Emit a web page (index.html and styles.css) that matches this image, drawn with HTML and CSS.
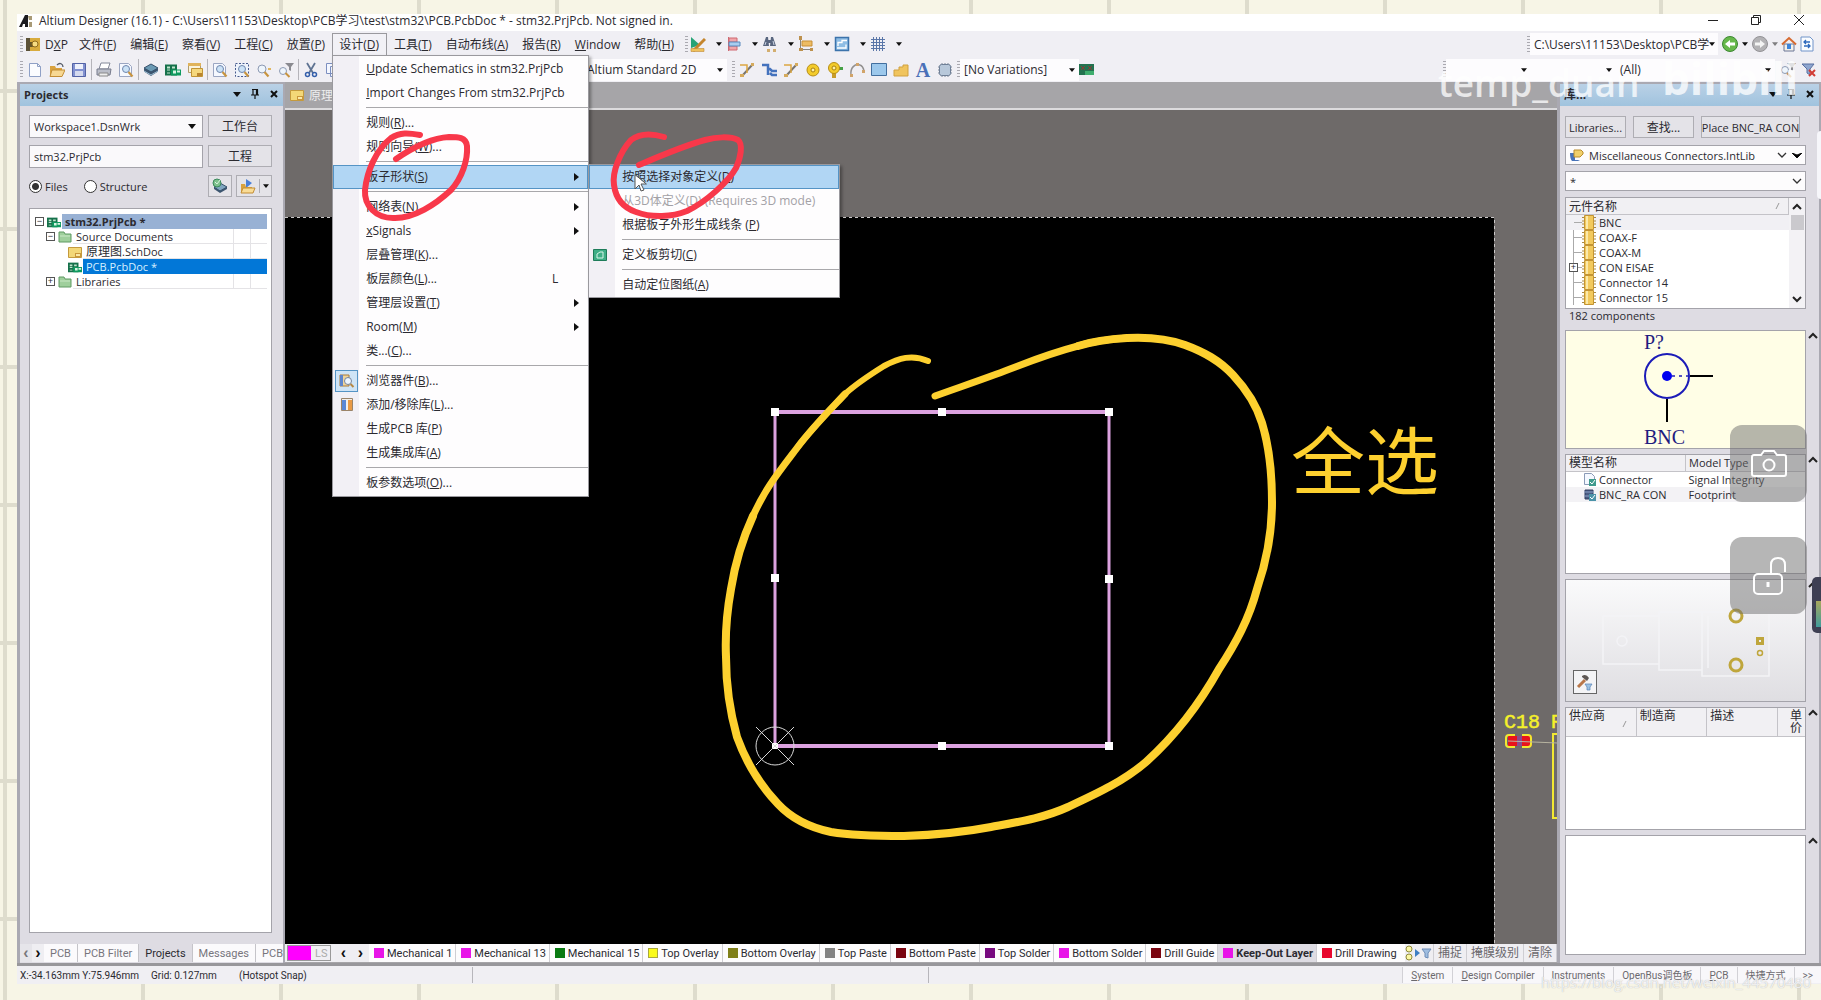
FILE: index.html
```html
<!DOCTYPE html>
<html lang="zh-CN">
<head>
<meta charset="utf-8">
<title>Altium Designer (16.1)</title>
<link rel="stylesheet" href="styles.css">
</head>
<body>
<svg class="defs" aria-hidden="true">
  <symbol id="caret" viewBox="0 0 8 5"><path d="M0 0h8L4 5z" fill="#111"/></symbol>
  <symbol id="down" viewBox="0 0 10 6"><path d="M1 1l4 4 4-4" fill="none" stroke="#333" stroke-width="1.3"/></symbol>
  <symbol id="up" viewBox="0 0 10 7"><path d="M1 6l4-4 4 4" fill="none" stroke="#222" stroke-width="2"/></symbol>
  <symbol id="right" viewBox="0 0 5 8"><path d="M0 0l5 4-5 4z" fill="#111"/></symbol>
  <symbol id="slash" viewBox="0 0 5 8"><path d="M1 7l3-6" stroke="#999"/></symbol>
  <symbol id="pin" viewBox="0 0 10 10"><path d="M2 .5h6M3 .5V6M6.500 .5V6M7.500 .5V6M1 6h8M5 6v4" fill="none" stroke="#111" stroke-width="1.200"/></symbol>
  <symbol id="close" viewBox="0 0 10 10"><path d="M2 2l6 6M8 2L2 8" stroke="#111" stroke-width="2"/></symbol>
  <symbol id="folder" viewBox="0 0 14 12"><path d="M1 11V1h5l1 2h6v8z" fill="#9fcf9c" stroke="#5f9a62"/><path d="M2 5h10" stroke="#c9e8c5"/></symbol>
  <symbol id="sch" viewBox="0 0 14 12"><path d="M.5 1.500h13v10H.5z" fill="#f3d777" stroke="#c49a3d"/><path d="M7 7h6v4H7z" fill="#c9963a"/><path d="M8 8h4v2H8z" fill="#fbe9a6"/></symbol>
  <symbol id="pcb" viewBox="0 0 16 12"><path d="M0 1h12v11H0z" fill="#16714b"/><path d="M2 3h3v2H2zM2 6h3v1H2zM2 9h3v1H2zM7 3h3v2H7z" fill="#bfe5cd"/><path d="M6 6h10v6H6z" fill="#0f9a5f"/><path d="M8 7h3v3H8zM12 7h3v2h-3z" fill="#d8f4e3"/></symbol>
  <symbol id="glass" viewBox="0 0 16 16"><path d="M1.500 1.500h9l3 3v10h-12z" fill="#f5f8ff" stroke="#9ba6c2"/><circle cx="8" cy="7" r="3.500" fill="#cbe2f6" stroke="#6f86ae"/><path d="M10.500 10l4 4.500" stroke="#c8943f" stroke-width="2.200"/></symbol>
  <symbol id="chip" viewBox="0 0 14 15"><path d="M0 2.500h14M0 6h14M0 9h14M0 12.500h14" stroke="#a88a45"/><path d="M2.500.5h9v14h-9z" fill="#f2c95c" stroke="#c39433"/><path d="M5 1v13" stroke="#fbe9a9" stroke-width="2"/></symbol>
  <symbol id="stack" viewBox="0 0 16 14"><path d="M1 8.500l7 4.500 7-4.500v-3H1z" fill="#3d5670"/><path d="M1 8l7 4 7-4" stroke="#9fc0d5" fill="none"/><path d="M8 1l7 4-7 4-7-4z" fill="#6b9ab4" stroke="#35506b"/></symbol>
  <symbol id="route" viewBox="0 0 16 16"><path d="M3 14L14 2" stroke="#77746f" stroke-width="2"/><path d="M1 3h7v8" fill="none" stroke="#dba640" stroke-width="1.500"/><path d="M1 12h4v3H1zM12 1h3v3h-3z" fill="#d5aa5c"/></symbol>
</svg>

<div class="app">
  <header class="titlebar">
    <svg width="14" height="12" viewBox="0 0 14 12"><path d="M0 12L6 0h3v12H6V9H4l-1 3z" fill="#1c1c20"/><path d="M9 1h4v4h-3zM10 7h3v5h-3z" fill="#a89a76"/></svg>
    <h1>Altium Designer (16.1) - C:\Users\11153\Desktop\PCB学习\test\stm32\PCB.PcbDoc * - stm32.PrjPcb. Not signed in.</h1>
    <div class="winbtns">
      <button aria-label="Minimize"><svg width="10" height="10"><path d="M0 5.500h10" stroke="#222"/></svg></button>
      <button aria-label="Restore"><svg width="10" height="10" fill="none" stroke="#222"><path d="M.5 2.500h7v7h-7zM2.500 2V.5h7v7H8"/></svg></button>
      <button aria-label="Close"><svg width="10" height="10"><path d="M0 0l10 10M10 0L0 10" stroke="#222"/></svg></button>
    </div>
  </header>

  <nav class="bar menubar">
    <i class="grip"></i>
    <button class="menu dxp"><svg width="15" height="15" viewBox="0 0 15 15"><path d="M0 1h14v13H0z" fill="#d8ab3d"/><path d="M0 1h4v13H0z" fill="#5b5137"/><path d="M4 5h3v5H4z" fill="#665528"/><circle cx="9" cy="7" r="3" fill="#f6dc83" stroke="#8f6b1d"/></svg><span>D<u>X</u>P</span></button>
    <button class="menu">文件(<u>F</u>)</button>
    <button class="menu">编辑(<u>E</u>)</button>
    <button class="menu">察看(<u>V</u>)</button>
    <button class="menu">工程(<u>C</u>)</button>
    <button class="menu">放置(<u>P</u>)</button>
    <div class="menu-open">
      <button class="menu active">设计(<u>D</u>)</button>
      <ul class="dropdown">
        <li><button><u>U</u>pdate Schematics in stm32.PrjPcb</button></li>
        <li><button><u>I</u>mport Changes From stm32.PrjPcb</button></li>
        <li class="sep"></li>
        <li><button>规则(<u>R</u>)...</button></li>
        <li><button>规则向导(<u>W</u>)...</button></li>
        <li class="sep"></li>
        <li class="has-sub"><button class="hot">板子形状(<u>S</u>)<svg class="arrow" width="5" height="8"><use href="#right"/></svg></button>
          <ul class="dropdown sub">
            <li><button class="hot">按照选择对象定义(<u>D</u>)</button></li>
            <li><button disabled>从3D体定义(<u>D</u>) (Requires 3D mode)</button></li>
            <li><button>根据板子外形生成线条 (<u>P</u>)</button></li>
            <li class="sep"></li>
            <li><button><svg class="mark" width="14" height="12" viewBox="0 0 14 12"><path d="M.5.5h13v11H.5z" fill="#3fae86" stroke="#1e7c59"/><path d="M4 9V5l3-2h3v6z" fill="none" stroke="#d8f5e9"/></svg>定义板剪切(<u>C</u>)</button></li>
            <li class="sep"></li>
            <li><button>自动定位图纸(<u>A</u>)</button></li>
          </ul>
        </li>
        <li class="sep"></li>
        <li><button>网络表(<u>N</u>)<svg class="arrow" width="5" height="8"><use href="#right"/></svg></button></li>
        <li><button><u>x</u>Signals<svg class="arrow" width="5" height="8"><use href="#right"/></svg></button></li>
        <li><button>层叠管理(<u>K</u>)...</button></li>
        <li><button>板层颜色(<u>L</u>)...<kbd>L</kbd></button></li>
        <li><button>管理层设置(<u>T</u>)<svg class="arrow" width="5" height="8"><use href="#right"/></svg></button></li>
        <li><button>Room(<u>M</u>)<svg class="arrow" width="5" height="8"><use href="#right"/></svg></button></li>
        <li><button>类...(<u>C</u>)...</button></li>
        <li class="sep"></li>
        <li><button><span class="mark checked"><svg width="16" height="14" viewBox="0 0 16 14"><path d="M1 1h9v11H1z" fill="#f0d59a" stroke="#aa7b3a"/><path d="M1 1h3v11H1z" fill="#5f86cc"/><circle cx="9" cy="7" r="3.500" fill="#eef6ff" stroke="#76839c"/><path d="M11.500 10l3 3" stroke="#b68843" stroke-width="2"/></svg></span>浏览器件(<u>B</u>)...</button></li>
        <li><button><span class="mark"><svg width="12" height="13" viewBox="0 0 12 13"><path d="M.5.5h11v12H.5z" fill="#f4efe9" stroke="#9b8468"/><path d="M1 2h4v10H1z" fill="#5a88d6"/><path d="M7 2h4v10H7z" fill="#e89a45"/></svg></span>添加/移除库(<u>L</u>)...</button></li>
        <li><button>生成PCB 库(<u>P</u>)</button></li>
        <li><button>生成集成库(<u>A</u>)</button></li>
        <li class="sep"></li>
        <li><button>板参数选项(<u>O</u>)...</button></li>
      </ul>
    </div>
    <button class="menu">工具(<u>T</u>)</button>
    <button class="menu">自动布线(<u>A</u>)</button>
    <button class="menu">报告(<u>R</u>)</button>
    <button class="menu"><u>W</u>indow</button>
    <button class="menu">帮助(<u>H</u>)</button>
    <i class="grip after"></i>
    <div class="drops">
      <button aria-label="Utilities"><svg width="16" height="16" viewBox="0 0 16 16"><path d="M1 1v11l9-3z" fill="#27a376"/><path d="M3 15L15 3" stroke="#c4852d" stroke-width="3"/><path d="M1 12.500h13v3H1z" fill="#efc15c" stroke="#c08a35" stroke-width=".6"/></svg><svg width="6" height="4"><use href="#caret"/></svg></button>
      <button aria-label="Align"><svg width="16" height="16" viewBox="0 0 16 16"><path d="M2.500 1v14" stroke="#cc6b74"/><path d="M3 2h8v4H3zM3 10h8v4H3z" fill="#f1a5aa" stroke="#cf6871"/><path d="M3 6h11v4H3z" fill="#a9cdf0" stroke="#5b89bd"/></svg><svg width="6" height="4"><use href="#caret"/></svg></button>
      <button aria-label="Find"><svg width="16" height="16" viewBox="0 0 16 16"><path d="M4 1h2l1 9H1zM9 1h2l3 9H8zM6 4h3v3H6z" fill="#59667f"/><path d="M4 6l-1 3M11 5l1 4" stroke="#c9d2e2"/><path d="M5 13h3v3H5zM11 13h3v3h-3z" fill="#d3ae6f"/></svg><svg width="6" height="4"><use href="#caret"/></svg></button>
      <button aria-label="Dimension"><svg width="16" height="16" viewBox="0 0 16 16"><path d="M2.500 1v14M2 13.500h13" stroke="#88867f"/><path d="M4 5h10v5H4z" fill="#edbc63" stroke="#c78f36"/><path d="M1 0h3v4H1zM1 12h4v3H1zM12 12h3v3h-3z" fill="#bd914e"/></svg><svg width="6" height="4"><use href="#caret"/></svg></button>
      <button aria-label="Room"><svg width="16" height="16" viewBox="0 0 16 16"><path d="M1.500 1.500h13v13h-13z" fill="#8ebde4" stroke="#3c73ab" stroke-width="1.500"/><path d="M4 10V6.500h4V4.500h5M3 12h9V8.500" fill="none" stroke="#fff" stroke-width="1.300"/></svg><svg width="6" height="4"><use href="#caret"/></svg></button>
      <button aria-label="Grid"><svg width="16" height="16" viewBox="0 0 16 16"><path d="M3.500 1v14M6.500 1v14M9.500 1v14M12.500 1v14M1 3.500h14M1 6.500h14M1 9.500h14M1 12.500h14" stroke="#5a76a8"/></svg><svg width="6" height="4"><use href="#caret"/></svg></button>
    </div>
    <span class="spacer"></span>
    <i class="grip"></i>
    <div class="field path"><span>C:\Users\11153\Desktop\PCB学</span><svg width="6" height="4"><use href="#caret"/></svg></div>
    <div class="navset">
      <button aria-label="Back"><svg width="18" height="18" viewBox="0 0 18 18"><circle cx="9" cy="9" r="7.500" fill="#67b84b" stroke="#3c8732"/><path d="M4 9l5-4v2.500h5v3H9V13z" fill="#fff"/></svg></button>
      <svg width="6" height="4"><use href="#caret"/></svg>
      <button aria-label="Forward"><svg width="18" height="18" viewBox="0 0 18 18"><circle cx="9" cy="9" r="7.500" fill="#b3b2b5" stroke="#939296"/><path d="M14 9l-5-4v2.500H4v3h5V13z" fill="#f4f4f4"/></svg></button>
      <svg class="dim" width="6" height="4"><use href="#caret"/></svg>
      <button aria-label="Home"><svg width="16" height="16" viewBox="0 0 16 16"><path d="M3 8h10v7H3z" fill="#f3f0ea" stroke="#6b7796"/><path d="M1 8.500l7-6.500 7 6.500" fill="none" stroke="#d66a31" stroke-width="2"/><path d="M6 8h4v5H6z" fill="#3c84dc"/></svg></button>
      <button aria-label="Refresh"><svg width="14" height="16" viewBox="0 0 14 16"><path d="M1 1h9l3 3v11H1z" fill="#fafcff" stroke="#7194c9"/><path d="M4 6h6M6 4L4 6l2 2M10 10H4M8 8l2 2-2 2" fill="none" stroke="#2c68bd" stroke-width="1.300"/></svg></button>
    </div>
  </nav>

  <div class="bar toolbar">
    <i class="grip"></i>
    <div class="group">
      <button aria-label="New"><svg width="16" height="16" viewBox="0 0 16 16"><path d="M2.500 1.500h8l3 3v10h-11z" fill="#fbfcff" stroke="#8fa0c6"/><path d="M10.500 1.500v3h3" fill="none" stroke="#8fa0c6"/></svg></button>
      <button aria-label="Open"><svg width="16" height="16" viewBox="0 0 16 16"><path d="M1 4h5l1 2h6v8H1z" fill="#d9a23f"/><path d="M3 8h13l-3 6.500H1z" fill="#f7d893" stroke="#c28d35"/><path d="M8 3c3-3 6-1 6 2" fill="none" stroke="#555c68" stroke-width="1.300"/></svg></button>
      <button aria-label="Save"><svg width="16" height="16" viewBox="0 0 16 16"><path d="M1.500 1.500h13v13h-13z" fill="#8291d0" stroke="#5363a6"/><path d="M4 2h8v5H4z" fill="#eef1fb"/><path d="M4 9h8v5H4z" fill="#d5daee"/></svg></button>
    </div>
    <div class="group">
      <button aria-label="Print"><svg width="16" height="16" viewBox="0 0 16 16"><path d="M5 1h9l-2 6H3z" fill="#fff" stroke="#838899"/><path d="M1 7h14l-1 6H1z" fill="#bbbec9" stroke="#777b8c"/><path d="M3 11h9v3H3z" fill="#eee" stroke="#888"/></svg></button>
      <button aria-label="Preview"><svg width="16" height="16"><use href="#glass"/></svg></button>
    </div>
    <div class="group">
      <button aria-label="Layers"><svg width="16" height="16"><use href="#stack"/></svg></button>
      <button aria-label="Board"><svg width="16" height="13"><use href="#pcb"/></svg></button>
      <button aria-label="Sheet"><svg width="16" height="16" viewBox="0 0 16 16"><path d="M1.500 1.500h12v9h-12z" fill="#faf3dc" stroke="#b19c6c"/><path d="M1 1h13v3H1z" fill="#e0b35b"/><path d="M4.500 6.500h11v8h-11z" fill="#f5d77c" stroke="#c19436"/><path d="M10 11h5v3h-5z" fill="#b9842f"/></svg></button>
    </div>
    <div class="group">
      <button aria-label="Fit document"><svg width="16" height="16"><use href="#glass"/></svg></button>
      <button aria-label="Zoom area"><svg width="16" height="16" viewBox="0 0 16 16"><path d="M1.500 1.500h13v13h-13z" fill="#eef3fb" stroke="#465a8e" stroke-dasharray="2 1.500"/><circle cx="8" cy="7" r="3.500" fill="#cbe2f6" stroke="#6f86ae"/><path d="M10.500 10l4 4.500" stroke="#c8943f" stroke-width="2.200"/></svg></button>
      <button aria-label="Zoom selected"><svg width="16" height="16" viewBox="0 0 16 16"><circle cx="6" cy="7" r="4" fill="#eef5fc" stroke="#8d9ab3"/><path d="M8.500 10l4 4.500" stroke="#c8943f" stroke-width="2.200"/><path d="M12 6h3v2h-3z" fill="#e0b660"/></svg></button>
      <button aria-label="Zoom filtered"><svg width="16" height="16" viewBox="0 0 16 16"><path d="M7 1h9l-3 4v4l-2-1V5z" fill="#8a8a90"/><circle cx="5" cy="9" r="3.500" fill="#eef5fc" stroke="#8d9ab3"/><path d="M7.500 11l4 4" stroke="#c8943f" stroke-width="2"/></svg></button>
    </div>
    <div class="group">
      <button aria-label="Cut"><svg width="16" height="16" viewBox="0 0 16 16"><path d="M4 1l6 10M12 1L6 11" stroke="#5f7392" stroke-width="1.800"/><circle cx="4.500" cy="12.500" r="2" fill="none" stroke="#345fab" stroke-width="1.500"/><circle cx="11.500" cy="12.500" r="2" fill="none" stroke="#345fab" stroke-width="1.500"/></svg></button>
      <button aria-label="Copy"><svg width="16" height="16" viewBox="0 0 16 16"><path d="M1.500 1.500h8v10h-8zM5.500 4.500h8v10h-8z" fill="#f4f7ff" stroke="#7c8fc0"/></svg></button>
    </div>
    <div class="field view"><span>Altium Standard 2D</span><svg width="6" height="4"><use href="#caret"/></svg></div>
    <i class="grip"></i>
    <div class="group place">
      <button aria-label="Route"><svg width="16" height="16"><use href="#route"/></svg></button>
      <button aria-label="Differential pair"><svg width="16" height="16" viewBox="0 0 16 16"><path d="M1 3h6v10M7 7h2l2 2h5M9 11l2 2h5" fill="none" stroke="#4472bd" stroke-width="2.500"/></svg></button>
      <button aria-label="Multi route"><svg width="16" height="16"><use href="#route"/></svg></button>
      <button aria-label="Pad"><svg width="16" height="16" viewBox="0 0 16 16"><circle cx="8" cy="8" r="6" fill="#f3cb2b" stroke="#b78d16"/><circle cx="8" cy="8" r="2" fill="#fff2a8" stroke="#a97f10"/></svg></button>
      <button aria-label="Via"><svg width="16" height="16" viewBox="0 0 16 16"><path d="M5 10h4v6H5z" fill="#c79c2b"/><path d="M10 5h6v3h-6z" fill="#45a046"/><circle cx="7" cy="6" r="5.500" fill="#f3cb2b" stroke="#b78d16"/><circle cx="7" cy="6" r="2" fill="#fff2a8" stroke="#a97f10"/></svg></button>
      <button aria-label="Arc"><svg width="16" height="16" viewBox="0 0 16 16"><path d="M2 13C1 6 6 1 11 3q3 1 4 6" fill="none" stroke="#92908f" stroke-width="1.500"/><path d="M1 12h3v3H1zM13 8h3v3h-3zM7 1h3v3H7z" fill="#d1a46a"/></svg></button>
      <button aria-label="Fill"><svg width="16" height="16" viewBox="0 0 16 16"><path d="M.5 1.500h15v12H.5z" fill="#9cc8ec" stroke="#426f9f"/></svg></button>
      <button aria-label="Polygon"><svg width="16" height="16" viewBox="0 0 16 16"><path d="M1 14V8h5V5h4V3h5v11z" fill="#f0c45e" stroke="#d1a13f"/></svg></button>
      <button class="letter" aria-label="Text">A</button>
      <button aria-label="Component"><svg width="16" height="16" viewBox="0 0 16 16"><path d="M1 5h14M1 8h14M1 11h14M5 1v14M8 1v14M11 1v14" stroke="#7a8698"/><rect x="2.500" y="2.500" width="11" height="11" rx="2" fill="#b8c8da" stroke="#6f7f96"/></svg></button>
    </div>
    <i class="grip"></i>
    <div class="field vars"><span>[No Variations]</span><svg width="6" height="4"><use href="#caret"/></svg></div>
    <button aria-label="Variants"><svg width="15" height="13" viewBox="0 0 15 13"><path d="M0 1h15v11H0z" fill="#23724f"/><path d="M2 3l4 4M6 3L2 7M9 3l4 4M13 3L9 7" stroke="#8b3a37"/><path d="M6 8h9v4H6z" fill="#3fae6e"/></svg></button>
    <span class="spacer"></span>
    <i class="grip"></i>
    <div class="field f1"><span></span><svg width="6" height="4"><use href="#caret"/></svg></div>
    <div class="field f1"><span></span><svg width="6" height="4"><use href="#caret"/></svg></div>
    <div class="field f2"><span>(All)</span><svg width="6" height="4"><use href="#caret"/></svg></div>
    <div class="navset last">
      <button aria-label="Find filter"><svg width="16" height="16" viewBox="0 0 16 16"><path d="M7 1h9l-3 4v4l-2-1V5z" fill="#8a8a90"/><circle cx="5" cy="8" r="3.500" fill="#eef5fc" stroke="#8d9ab3"/><path d="M7 11l4 4" stroke="#c8943f" stroke-width="2"/></svg></button>
      <button aria-label="Clear filter"><svg width="14" height="16" viewBox="0 0 14 16"><path d="M0 2h12L8 7v6l-3-2V7z" fill="#8ea6d0" stroke="#586fa0"/><path d="M7 8l6 6M13 8l-6 6" stroke="#d23c34" stroke-width="2"/></svg></button>
    </div>
  </div>

  <main class="work">
    <aside class="panel left">
      <h2>Projects<svg width="8" height="5"><use href="#caret"/></svg><svg width="10" height="10"><use href="#pin"/></svg><svg width="10" height="10"><use href="#close"/></svg></h2>
      <div class="projects">
        <div class="form">
          <div class="select"><select aria-label="Workspace"><option>Workspace1.DsnWrk</option></select><svg width="8" height="5"><use href="#caret"/></svg></div>
          <button class="btn cjk">工作台</button>
          <input class="text" type="text" aria-label="Project" value="stm32.PrjPcb">
          <button class="btn cjk">工程</button>
          <div class="radios">
            <label><input type="radio" name="view" checked>Files</label>
            <label><input type="radio" name="view">Structure</label>
          </div>
          <div class="pair">
            <button class="btn sq" aria-label="Compile"><svg width="16" height="16" viewBox="0 0 16 16"><path d="M2 11l6 4 7-4V9H2z" fill="#3d5670"/><path d="M8 5l7 4-7 4-6-4z" fill="#7fa6c0" stroke="#35506b"/><circle cx="5" cy="5" r="4" fill="#7cc08c" stroke="#3b8a5c"/><path d="M3 4l2 2 3-4" fill="none" stroke="#d9f2df"/></svg></button>
            <button class="btn wide" aria-label="Open project"><svg width="16" height="16" viewBox="0 0 16 16"><path d="M6 1l6 4-6 5z" fill="#4a7fd8"/><path d="M1 6h4l1 3h6v5H1z" fill="#d9a23f"/><path d="M3 10h12l-2 5H1z" fill="#f9dc96" stroke="#c28d35"/></svg><i></i><svg width="6" height="4"><use href="#caret"/></svg></button>
          </div>
        </div>
        <ul class="tree">
          <li class="l0"><b class="tog">−</b><svg width="14" height="12" viewBox="0 0 14 12"><use href="#pcb"/></svg><span class="name head">stm32.PrjPcb *</span></li>
          <li class="l1"><b class="tog">−</b><svg width="14" height="12"><use href="#folder"/></svg><span class="name cells">Source Documents</span></li>
          <li class="l2"><svg width="14" height="12"><use href="#sch"/></svg><span class="name cells"><em>原理图</em>.SchDoc</span></li>
          <li class="l2"><svg width="14" height="12" viewBox="0 0 14 12"><use href="#pcb"/></svg><span class="name sel">PCB.PcbDoc *</span></li>
          <li class="l1"><b class="tog">+</b><svg width="14" height="12"><use href="#folder"/></svg><span class="name cells">Libraries</span></li>
        </ul>
      </div>
      <div class="tabs">
        <button class="step dim">‹</button><button class="step">›</button>
        <button>PCB</button><button>PCB Filter</button><button class="on">Projects</button><button>Messages</button><button class="cut">PCB</button>
      </div>
    </aside>

    <section class="doc">
      <div class="doctabs"><svg width="14" height="12"><use href="#sch"/></svg><span>原理图</span></div>
      <div class="canvas">
        <svg viewBox="285 110 1273 834" preserveAspectRatio="xMinYMin slice">
          <path d="M285 217h1209v727H285z" fill="#000"/>
          <path d="M285 217.500h1209.500V944" fill="none" stroke="#c9c7c7" stroke-dasharray="3 3"/>
          <g stroke="#dca2df"><path d="M775 412h334M775 746h334" stroke-width="4"/><path d="M775 412v334M1109 412v334" stroke-width="3"/></g>
          <g fill="#fff"><path d="M771 408h8v8h-8zM938 408h8v8h-8zM1105 408h8v8h-8zM771 574h8v8h-8zM1105 575h8v8h-8zM938 742h8v8h-8zM1105 742h8v8h-8zM772 743h6v6h-6z"/></g>
          <g fill="none" stroke="#d8d8d8"><circle cx="775" cy="746" r="19"/><path d="M756 727l38 38M794 727l-38 38"/></g>
          <g font-family="Liberation Mono, monospace" font-size="20" fill="#f5f02a" stroke="#f5f02a" stroke-width=".5"><text x="1504" y="728">C18</text><text x="1551" y="728">R</text></g>
          <path d="M1508 736h24v10h-24z" fill="#e8121c"/><path d="M1517 736h5v10h-5z" fill="#8b4a8e"/>
          <path d="M1515 735h-6q-3 0-3 3v6q0 3 3 3h6M1522 735h6q3 0 3 3v6q0 3-3 3h-6M1558 734h-5v84h5" fill="none" stroke="#f2e832" stroke-width="2"/>
          <path d="M1508 741l50 2" stroke="#b7b3a0"/>
        </svg>
      </div>
      <div class="layers">
        <span class="ls"><i></i>LS</span>
        <button class="step">‹</button><button class="step">›</button>
        <button><i class="magenta"></i>Mechanical 1</button>
        <button><i class="magenta"></i>Mechanical 13</button>
        <button><i class="green"></i>Mechanical 15</button>
        <button><i class="yellow"></i>Top Overlay</button>
        <button><i class="olive"></i>Bottom Overlay</button>
        <button><i class="gray"></i>Top Paste</button>
        <button><i class="maroon"></i>Bottom Paste</button>
        <button><i class="purple"></i>Top Solder</button>
        <button><i class="magenta"></i>Bottom Solder</button>
        <button><i class="maroon"></i>Drill Guide</button>
        <button class="on"><i class="magenta"></i>Keep-Out Layer</button>
        <button class="clip"><i class="red"></i>Drill Drawing</button>
        <button class="cmd" aria-label="Filter"><svg width="28" height="16" viewBox="0 0 28 16"><circle cx="4" cy="4" r="3" fill="#fbf7a5" stroke="#8f8a3c"/><circle cx="4" cy="12" r="3" fill="#fbf7a5" stroke="#8f8a3c"/><path d="M10 4l5 4-5 4z" fill="#3f7fc4"/><path d="M17 4h9l-3 4v5l-3-1V8z" fill="#9fbde0" stroke="#6c8cb8"/></svg></button>
        <button class="cmd">捕捉</button><button class="cmd">掩膜级别</button><button class="cmd">清除</button>
      </div>
    </section>

    <aside class="panel right">
      <h2>库...<svg width="8" height="5"><use href="#caret"/></svg><svg width="10" height="10"><use href="#pin"/></svg><svg width="10" height="10"><use href="#close"/></svg></h2>
      <div class="lib">
        <div class="row">
          <button class="btn">Libraries...</button><button class="btn cjk">查找...</button><button class="btn place-btn">Place BNC_RA CON</button>
        </div>
        <div class="select flat"><svg class="ico" width="14" height="12" viewBox="0 0 14 12"><path d="M0 4h5v7h5l-2 1H2q-2-2-2-8z" fill="#4873b9"/><path d="M4 1h7q3 2 2 4l-3 3H4z" fill="#f1d06b" stroke="#b98d2f"/></svg><select aria-label="Library"><option>Miscellaneous Connectors.IntLib</option></select><svg width="10" height="6"><use href="#down"/></svg><svg width="10" height="5" viewBox="0 0 10 5"><path d="M0 0l5 2 5-2-5 5z" stroke="#111"/></svg></div>
        <div class="select flat"><input type="text" aria-label="Filter" value="*"><svg width="10" height="6"><use href="#down"/></svg></div>
        <div class="box comps">
          <div class="list">
            <div class="th">元件名称<svg width="5" height="8"><use href="#slash"/></svg></div>
            <ul>
              <li class="cur"><svg width="14" height="15"><use href="#chip"/></svg>BNC</li>
              <li><svg width="14" height="15"><use href="#chip"/></svg>COAX-F</li>
              <li><svg width="14" height="15"><use href="#chip"/></svg>COAX-M</li>
              <li class="plus"><b class="tog">+</b><svg width="14" height="15"><use href="#chip"/></svg>CON EISAE</li>
              <li><svg width="14" height="15"><use href="#chip"/></svg>Connector 14</li>
              <li><svg width="14" height="15"><use href="#chip"/></svg>Connector 15</li>
            </ul>
          </div>
          <div class="scroll"><svg width="10" height="7"><use href="#up"/></svg><i></i><span></span><svg class="flip" width="10" height="7"><use href="#up"/></svg></div>
        </div>
        <p class="count">182 components</p>
        <div class="fold"><div class="box symbol">
          <svg width="239" height="116" viewBox="0 0 239 116"><g font-family="Liberation Serif, serif" font-size="20" fill="#1f1d80"><text x="78" y="18">P?</text><text x="78" y="113">BNC</text></g><circle cx="101" cy="45" r="22" fill="none" stroke="#1c1cb8" stroke-width="2"/><circle cx="101" cy="45" r="5" fill="#0000f0"/><path d="M106 45h16" stroke="#1c1cb8" stroke-width="1.500" stroke-dasharray="3 4"/><path d="M124 45h23M101 68v23" stroke="#000" stroke-width="2"/></svg>
        </div><svg width="10" height="7"><use href="#up"/></svg></div>
        <div class="fold"><div class="box models">
          <table>
            <thead><tr><th>模型名称</th><th>Model Type</th></tr></thead>
            <tbody>
              <tr><td><svg width="12" height="13" viewBox="0 0 12 13"><path d="M.5.5h7l3 3v8H.5z" fill="#f4f8ff" stroke="#8b9bb8"/><path d="M5 6h7v7H5z" fill="#3f9a8c"/><path d="M6 9l2 2 3-4" fill="none" stroke="#fff"/></svg>Connector</td><td>Signal Integrity</td></tr>
              <tr class="alt"><td><svg width="12" height="13" viewBox="0 0 12 13"><path d="M1 2h8v9H1z" fill="#4b5d83" stroke="#333f60"/><path d="M0 4h10M0 8h10" stroke="#8ea3c8"/><path d="M5 6h7v7H5z" fill="#4b93a8"/><path d="M6 9l2 2 3-4" fill="none" stroke="#fff"/></svg>BNC_RA CON</td><td>Footprint</td></tr>
            </tbody>
          </table>
        </div><svg width="10" height="7"><use href="#up"/></svg></div>
        <div class="fold"><div class="box foot">
          <svg width="239" height="120" viewBox="0 0 239 120"><g fill="none" stroke="#f3f3f6" stroke-width="1.500"><path d="M37 36h56v48H37zM93 32h43v58H93zM136 32h67v64h-67zM142 36v52"/><circle cx="56" cy="61" r="5"/></g><g fill="none" stroke="#bfa63c" stroke-width="3"><circle cx="170" cy="36" r="6"/><circle cx="170" cy="85" r="6"/><path d="M191.500 58.500h5v5h-5z"/><circle cx="194" cy="73" r="2.500" stroke-width="1.500"/></g></svg>
          <button class="tool" aria-label="Tools"><svg width="18" height="18" viewBox="0 0 18 18"><path d="M2 14l7-7" stroke="#b8774a" stroke-width="3"/><path d="M6 3q4-3 7 2l-2 3-5-4z" fill="#5d5754"/><path d="M9 11h7l-2 3v3h-3v-3z" fill="#9cc2e4" stroke="#5882b4" stroke-width=".7"/></svg></button>
        </div><svg width="10" height="7"><use href="#up"/></svg></div>
        <div class="fold"><div class="box supply">
          <table><thead><tr><th>供应商<svg width="5" height="8"><use href="#slash"/></svg></th><th>制造商</th><th>描述</th><th class="end">单<br>价</th></tr></thead></table>
        </div><svg width="10" height="7"><use href="#up"/></svg></div>
        <div class="fold grow"><div class="box"></div><svg width="10" height="7"><use href="#up"/></svg></div>
      </div>
    </aside>
  </main>

  <footer class="status">
    <span class="xy">X:-34.163mm Y:75.946mm</span><span class="grid">Grid: 0.127mm</span><span class="snap">(Hotspot Snap)</span><span class="msg"></span>
    <span class="spacer"></span>
    <button><u>S</u>ystem</button><button><u>D</u>esign Compiler</button><button><u>I</u>nstruments</button><button>OpenBus调色板</button><button><u>P</u>CB</button><button>快捷方式</button><button>&gt;&gt;</button>
  </footer>
</div>

<svg class="ink" width="1460" height="860" viewBox="0 0 1460 860" fill="none" stroke-linecap="round" stroke-linejoin="round">
  <g stroke="#f8384a" stroke-width="6">
    <path d="M420 135C409 133 400 132 391 138C376 150 367 171 365 190C364 206 376 218 393 218C414 219 436 204 451 190C462 178 468 160 467 146C466 137 458 137 449 137C432 138 412 148 396 159"/>
    <path d="M664 137C651 133 640 133 631 140C620 152 612 172 614 185C616 200 624 208 636 212C652 218 672 217 687 211C706 202 728 182 736 168C741 157 743 144 738 140C730 136 716 137 705 140C683 146 660 156 639 165"/>
  </g>
  <g stroke="#fdd02f">
    <path stroke-width="6" d="M928 361C912 354 899 358 884 366C868 376 856 384 845 394C828 412 812 428 797 448"/>
    <path stroke-width="7" d="M845 394C828 412 812 428 797 448C778 473 765 489 753 516"/>
    <path stroke-width="8" d="M753 516C741 542 735 564 731 589C727 611 725 634 726 657C726 684 730 712 737 737C746 762 760 785 778 804C792 819 812 828 831 832C855 836 880 836 904 836C934 835 965 832 991 827C1018 822 1044 818 1068 807C1098 793 1124 781 1146 762C1176 735 1200 703 1219 669C1236 643 1249 619 1257 589C1267 560 1272 530 1272 502C1272 475 1270 449 1262 423C1256 403 1246 389 1233 375C1219 360 1204 352 1185 345C1166 338 1147 337 1127 338C1110 339 1094 341 1078 346"/>
    <path stroke-width="7" d="M1127 338C1110 339 1094 341 1078 346C1055 352 1033 360 1010 369C984 379 960 387 935 396"/>
  </g>
  <path d="M635 175v14l4-4 2 6 3-1-3-6h5z" fill="#fff" stroke="#555"/>
</svg>
<div class="note">全选</div>
<div class="author">temp_duan</div>
<div class="brand">bilibili</div>
<div class="float camera"><svg width="36" height="28" viewBox="0 0 36 28" fill="none" stroke="#fff" stroke-width="2"><path d="M3 5h7l3-4h10l3 4h7q2 0 2 2v17q0 2-2 2H3q-2 0-2-2V7q0-2 2-2z"/><circle cx="18" cy="15" r="5.500"/></svg></div>
<div class="float lock"><svg width="36" height="40" viewBox="0 0 36 40" fill="none" stroke="#fff" stroke-width="2"><rect x="3" y="18" width="28" height="20" rx="4"/><path d="M20 17V9q0-7 7-7t7 7v7"/><path d="M17 26v5" stroke-width="3"/></svg></div>
<div class="edge"><i></i></div>
<div class="edge pale"></div>
<div class="csdn">https://blog.csdn.net/weixin_44570480</div>
</body>
</html>
```
FILE: styles.css
```css
* { box-sizing: border-box; }
body {
  margin: 0; position: relative; min-height: 100vh; overflow: hidden;
  font: 12px/15px "Open Sans", "Noto Sans CJK SC", sans-serif; color: #2b2a30;
  background-color: #f7f5e6;
  background-image: linear-gradient(90deg, #dedccd 4px, transparent 4px), linear-gradient(#dedccd 4px, transparent 4px);
  background-size: 138px 138px; background-position: 3px 0, 0 89px;
}
button, input, select { font: inherit; color: inherit; margin: 0; padding: 0; border: 0; background: none; border-radius: 0; }
button { white-space: nowrap; display: flex; align-items: center; }
ul, h1, h2, p { margin: 0; padding: 0; list-style: none; font-weight: normal; }
svg { flex: none; display: block; }
.defs { position: absolute; width: 0; height: 0; }
.spacer { flex: 1; }
.dim { opacity: .5; }

.app { margin-left: 17px; height: calc(100vh - 16px); padding-top: 14px; display: flex; flex-direction: column; }
.titlebar { height: 17px; background: #fff; display: flex; align-items: flex-start; padding-left: 2px; flex: none; }
.titlebar > svg { margin-top: 1px; }
.titlebar h1 { font-size: 12px; line-height: 13px; margin-left: 6px; flex: 1; white-space: nowrap; }
.winbtns { display: flex; gap: 33px; padding: 1px 17px 0 0; }

.bar { background: #f0eff4; display: flex; align-items: center; flex: none; height: 26px; padding-left: 3px; }
.toolbar { height: 25px; }
.grip { width: 3px; height: 17px; flex: none; background: repeating-linear-gradient(#aaa9b0 0 1px, transparent 1px 3px); }
.after { margin-left: 4px; }
.menu { height: 23px; padding: 0 7px; }
.dxp { gap: 4px; padding-left: 3px; padding-right: 4px; }
.menu-open { position: relative; z-index: 5; }
.menu.active { border: 1px solid #9a999e; border-bottom: 0; padding: 0 7px 0 6px; background: #f2f1f6; }
.dropdown { position: absolute; left: 0; top: 22px; width: 257px; padding: 1px 0; border: 1px solid #9a999e; background: linear-gradient(90deg, #f2f0f5 26px, #fefdfe 26px); box-shadow: 2px 2px 3px rgba(0,0,0,.35); }
.dropdown button { width: 100%; height: 24px; padding: 0 8px 0 32px; position: relative; border: 1px solid transparent; }
.dropdown .hot { background: #b1d6f4; border-color: #5594c5; }
.dropdown :disabled { color: #a3a1a6; }
.dropdown .sep { height: 6px; margin-left: 33px; background: linear-gradient(#a9a8ab, #a9a8ab) 0 2px / 100% 1px no-repeat; }
.dropdown .arrow { margin-left: auto; }
.dropdown kbd { font: inherit; margin: 0 21px 0 auto; }
.dropdown .mark { position: absolute; left: 1px; width: 23px; height: 22px; display: flex; align-items: center; justify-content: center; }
.dropdown svg.mark { width: 14px; height: 12px; left: 3px; }
.dropdown .checked { background: #cfe4f6; border: 1px solid #5594c5; }
.has-sub { position: relative; }
.dropdown.sub { left: 255px; top: -1px; width: 252px; padding: 0; }

.drops { display: flex; gap: 4px; padding-left: 2px; }
.drops button { width: 32px; gap: 10px; }
.field { background: #fdfcfe; height: 22px; display: flex; align-items: center; padding: 0 4px; white-space: nowrap; }
.field span { flex: 1; }
.path { width: 188px; }
.navset { display: flex; align-items: center; gap: 3px; padding: 0 7px 0 3px; }
.group { display: flex; align-items: center; gap: 6px; padding: 0 4px; border-right: 1px solid #b5b4ba; height: 21px; }
.group button { width: 16px; justify-content: center; }
.group:nth-of-type(5) { border: 0; }
.group.place { border: 0; }
.letter { font: bold 20px/20px "Liberation Serif", serif; color: #4a70b8; }
.view { width: 144px; margin: 0 5px 0 238px; }
.vars { width: 119px; }
.f1 { width: 85px; }
.f2 { width: 159px; }
.last { gap: 6px; padding: 0 5px; }

.work { flex: 1; min-height: 0; display: flex; background: #a6a5a8; border-bottom: 3px solid #98979b; }
.panel { display: flex; flex-direction: column; border: 1px solid #aaa9b2; border-width: 2px 2px 0; background: #dedce3; flex: none; font-size: 11px; }
.left { width: 268px; border-left-width: 3px; }
.right { width: 264px; border-left-width: 3px; }
.panel h2 { height: 22px; flex: none; display: flex; align-items: center; gap: 9px; padding: 0 4px 2px 4px; font-size: 12px; font-weight: bold; background: linear-gradient(#bad1e6, #a0c3de); }
.left h2 { font-size: 11px; }
.panel h2 svg:first-of-type { margin-left: auto; }
.projects { flex: 1; min-height: 0; padding: 9px 11px 11px 9px; display: flex; flex-direction: column; gap: 11px; }
.form { display: grid; grid-template-columns: 1fr 64px; gap: 7px 5px; }
.btn { border: 1px solid #aeadb3; background: #e4e3e8; height: 22px; justify-content: center; }
.btn.cjk { font-size: 12px; }
.select, .text { height: 23px; border: 1px solid #a4a3aa; background: #faf9fb; display: flex; align-items: center; padding: 0 6px 0 4px; min-width: 0; }
.select select, .select input { appearance: none; flex: 1; min-width: 0; outline: 0; }
.text { width: 100%; }
.radios { display: flex; gap: 16px; align-items: center; }
.radios label { display: flex; align-items: center; gap: 3px; }
.radios input { width: 13px; height: 13px; appearance: none; border: 1px solid #333; border-radius: 50%; background: #fff; }
.radios input:checked { background: radial-gradient(#333 3px, #fff 4px); }
.pair { display: flex; gap: 4px; }
.sq { width: 24px; }
.wide { width: 36px; gap: 3px; }
.wide i { width: 1px; height: 14px; background: #aeadb3; }
.tree { flex: 1; background: #fff; border: 1px solid #a4a3aa; padding: 5px 4px 0 5px; }
.tree li { display: flex; align-items: center; height: 15px; gap: 1px; }
.tog { width: 9px; height: 9px; border: 1px solid #555; background: #fff; font: 9px/7px "Liberation Sans", sans-serif; text-align: center; margin-right: 2px; flex: none; }
.tree .l1 { padding-left: 11px; }
.tree .l2 { padding-left: 33px; }
.name { flex: 1; padding-left: 3px; height: 15px; line-height: 15px; white-space: nowrap; }
.name em { font-style: normal; font-size: 12px; }
.head { background: #98b1d4; font-weight: bold; }
.sel { background: #0277d7; color: #d7f0ff; }
.cells { border-bottom: 1px solid #e4e3e6; background: linear-gradient(#e4e3e6, #e4e3e6) right 33px top / 1px 15px no-repeat, linear-gradient(#e4e3e6, #e4e3e6) right 16px top / 1px 15px no-repeat; }
.tabs, .layers { height: 18px; flex: none; display: flex; font-size: 11px; overflow: hidden; margin-bottom: 1px; }
.tabs { font-family: Roboto, sans-serif; }
.tabs button { background: #fbfafc; color: #77757c; padding: 0 6px; border-right: 1px solid #c5c4c9; }
.tabs .on { background: #dedce3; color: #2b2a30; }
.tabs .step, .layers .step { width: 17px; background: #efeef2; border: 0; padding: 0; justify-content: center; font: bold 16px/14px "Liberation Sans", sans-serif; color: #111; }
.tabs .cut { flex: 1; border: 0; padding-right: 0; }

.doc { flex: 1; min-width: 0; display: flex; flex-direction: column; }
.doctabs { height: 26px; flex: none; display: flex; align-items: center; gap: 5px; padding-left: 5px; color: #eee; }
.canvas { flex: 1; min-height: 0; border-top: 2px solid #dcdbdd; background: #6e6a69; overflow: hidden; }
.canvas svg { width: 1273px; height: 834px; }
.layers { background: #f0eff3; font-family: Roboto, "Noto Sans CJK SC", sans-serif; }
.layers button { padding: 0 3px 0 5px; gap: 3px; background: #fdfcfd; border-right: 1px solid #cfced3; flex: none; }
.layers i { width: 10px; height: 10px; flex: none; }
.ls { border: 1px solid #999; width: 44px; height: 16px; display: flex; gap: 4px; margin: 1px 4px 0 2px; color: #aaa; flex: none; }
.layers .ls i { width: 23px; height: 14px; background: #f0f; }
.magenta { background: #e815e8; } .green { background: #0a7a12; } .yellow { background: #fafa1a; border: 1px solid #aaa83c; }
.olive { background: #80801a; } .gray { background: #848484; } .maroon { background: #7a0410; } .purple { background: #780a80; } .red { background: #e8082e; }
.layers .on { background: #dedce3; font-weight: bold; }
.layers .clip { flex: 1; min-width: 0; overflow: hidden; border: 0; padding-right: 0; }
.layers .cmd { padding: 0 4px; background: #efeef2; color: #6b696e; font-size: 12px; }
.layers .cmd[aria-label] { padding: 0; }

.lib { flex: 1; min-height: 0; padding: 10px 0 8px 5px; display: flex; flex-direction: column; }
.row { display: flex; gap: 7px; margin-bottom: 7px; }
.row .btn { width: 61px; }
.row .place-btn { width: 99px; }
.flat { height: 20px; width: 241px; margin-bottom: 6px; padding: 0 3px 0 4px; gap: 5px; background: #fdfcfd; flex: none; }
.box { border: 1px solid #a4a3aa; background: #fff; width: 241px; flex: none; }
.comps { height: 112px; display: flex; }
.list { flex: 1; overflow: hidden; }
.th { height: 17px; background: #f1f0f3; border-bottom: 1px solid #c4c3c8; border-right: 1px solid #c4c3c8; font-size: 12px; padding: 0 8px 0 3px; display: flex; align-items: center; justify-content: space-between; }
.list ul { background: linear-gradient(90deg, transparent 7px, #aaa 7px 8px, transparent 8px); }
.list li { height: 15px; display: flex; align-items: center; gap: 3px; padding-left: 16px; background: linear-gradient(#aaa, #aaa) 8px 7px / 8px 1px no-repeat; }
.list .plus { padding-left: 3px; }
.list .plus svg { margin-left: -1px; }
.list .cur { background-color: #f1f0f4; }
.scroll { width: 16px; background: #f3f2f5; display: flex; flex-direction: column; align-items: center; padding: 5px 0; }
.scroll i { width: 13px; height: 15px; background: #cac9cd; margin-top: 5px; }
.scroll span { flex: 1; }
.flip { transform: rotate(180deg); }
.count { padding: 0 4px; height: 21px; line-height: 14px; }
.fold { display: flex; gap: 2px; margin-bottom: 5px; }
.fold > svg { margin-top: 2px; }
.symbol { background: #fffee6; height: 119px; }
.models { height: 120px; }
.box table { border-collapse: collapse; width: 100%; table-layout: fixed; }
.box th { font-size: 11px; font-weight: normal; text-align: left; background: #f1f0f3; border-bottom: 1px solid #c4c3c8; border-left: 1px solid #c4c3c8; padding: 0 3px; height: 16px; line-height: 15px; vertical-align: top; }
.box th:first-child { border-left: 0; font-size: 12px; }
.models td { height: 15px; padding: 0 3px; line-height: 15px; white-space: nowrap; }
.models td svg { display: inline-block; vertical-align: -2px; margin: 0 3px 0 15px; }
.alt td { background: #f3f2f5; }
.foot { height: 123px; position: relative; background: linear-gradient(#fafafb, #dfdee2); }
.tool { position: absolute; left: 7px; bottom: 7px; width: 24px; height: 24px; border: 1px solid #666; background: #f4f4f6; justify-content: center; }
.supply { height: 123px; }
.box.supply th { font-size: 12px; height: 28px; line-height: 12px; padding-top: 2px; }
.supply th svg { float: right; margin: 10px 6px 0 0; }
.supply .end { width: 28px; text-align: right; }
.grow { flex: 1; margin: 0; }

.status { height: 18px; flex: none; background: #f0eff3; display: flex; align-items: center; font: 10px/15px Roboto, "Noto Sans CJK SC", sans-serif; padding-left: 3px; }
.xy { width: 131px; white-space: nowrap; } .grid { width: 88px; } .snap { width: 233px; } .msg { width: 457px; height: 16px; border: 1px solid #b7b6bb; border-width: 0 1px; }
.status button { height: 16px; padding: 0 8px; border-left: 1px solid #d2d1d6; color: #6b696e; background: #f8f7fa; }

.ink { position: absolute; left: 0; top: 0; z-index: 10; pointer-events: none; }
.note { position: absolute; left: 1291px; top: 412px; font: 74px/90px "Noto Sans CJK SC", sans-serif; color: #fdd02f; z-index: 10; }
.author, .brand { position: absolute; z-index: 10; color: rgba(255,255,255,.75); white-space: nowrap; }
.author { left: 1438px; top: 61px; font: 600 37px/44px "Open Sans", sans-serif; }
.brand { left: 1662px; top: 53px; font: bold 44px/50px "Open Sans", sans-serif; }
.float { position: absolute; z-index: 10; left: 1730px; width: 77px; height: 77px; border-radius: 12px; background: rgba(110,110,110,.5); display: flex; align-items: center; justify-content: center; }
.camera { top: 425px; } .lock { top: 537px; }
.edge { position: absolute; z-index: 10; right: 0; top: 577px; width: 9px; height: 56px; border-radius: 5px 0 0 5px; background: #3e3f53; padding: 24px 0 0 4px; }
.edge i { display: block; height: 26px; background: linear-gradient(#a9a75c, #3f9c9c); }
.edge.pale { top: 131px; width: 3px; height: 68px; background: #f6f6fa; }
.csdn { position: absolute; z-index: 10; left: 1541px; top: 972px; font-size: 15px; line-height: 20px; color: rgba(255,255,255,.8); text-shadow: 0 0 1px #aaa; }
```
